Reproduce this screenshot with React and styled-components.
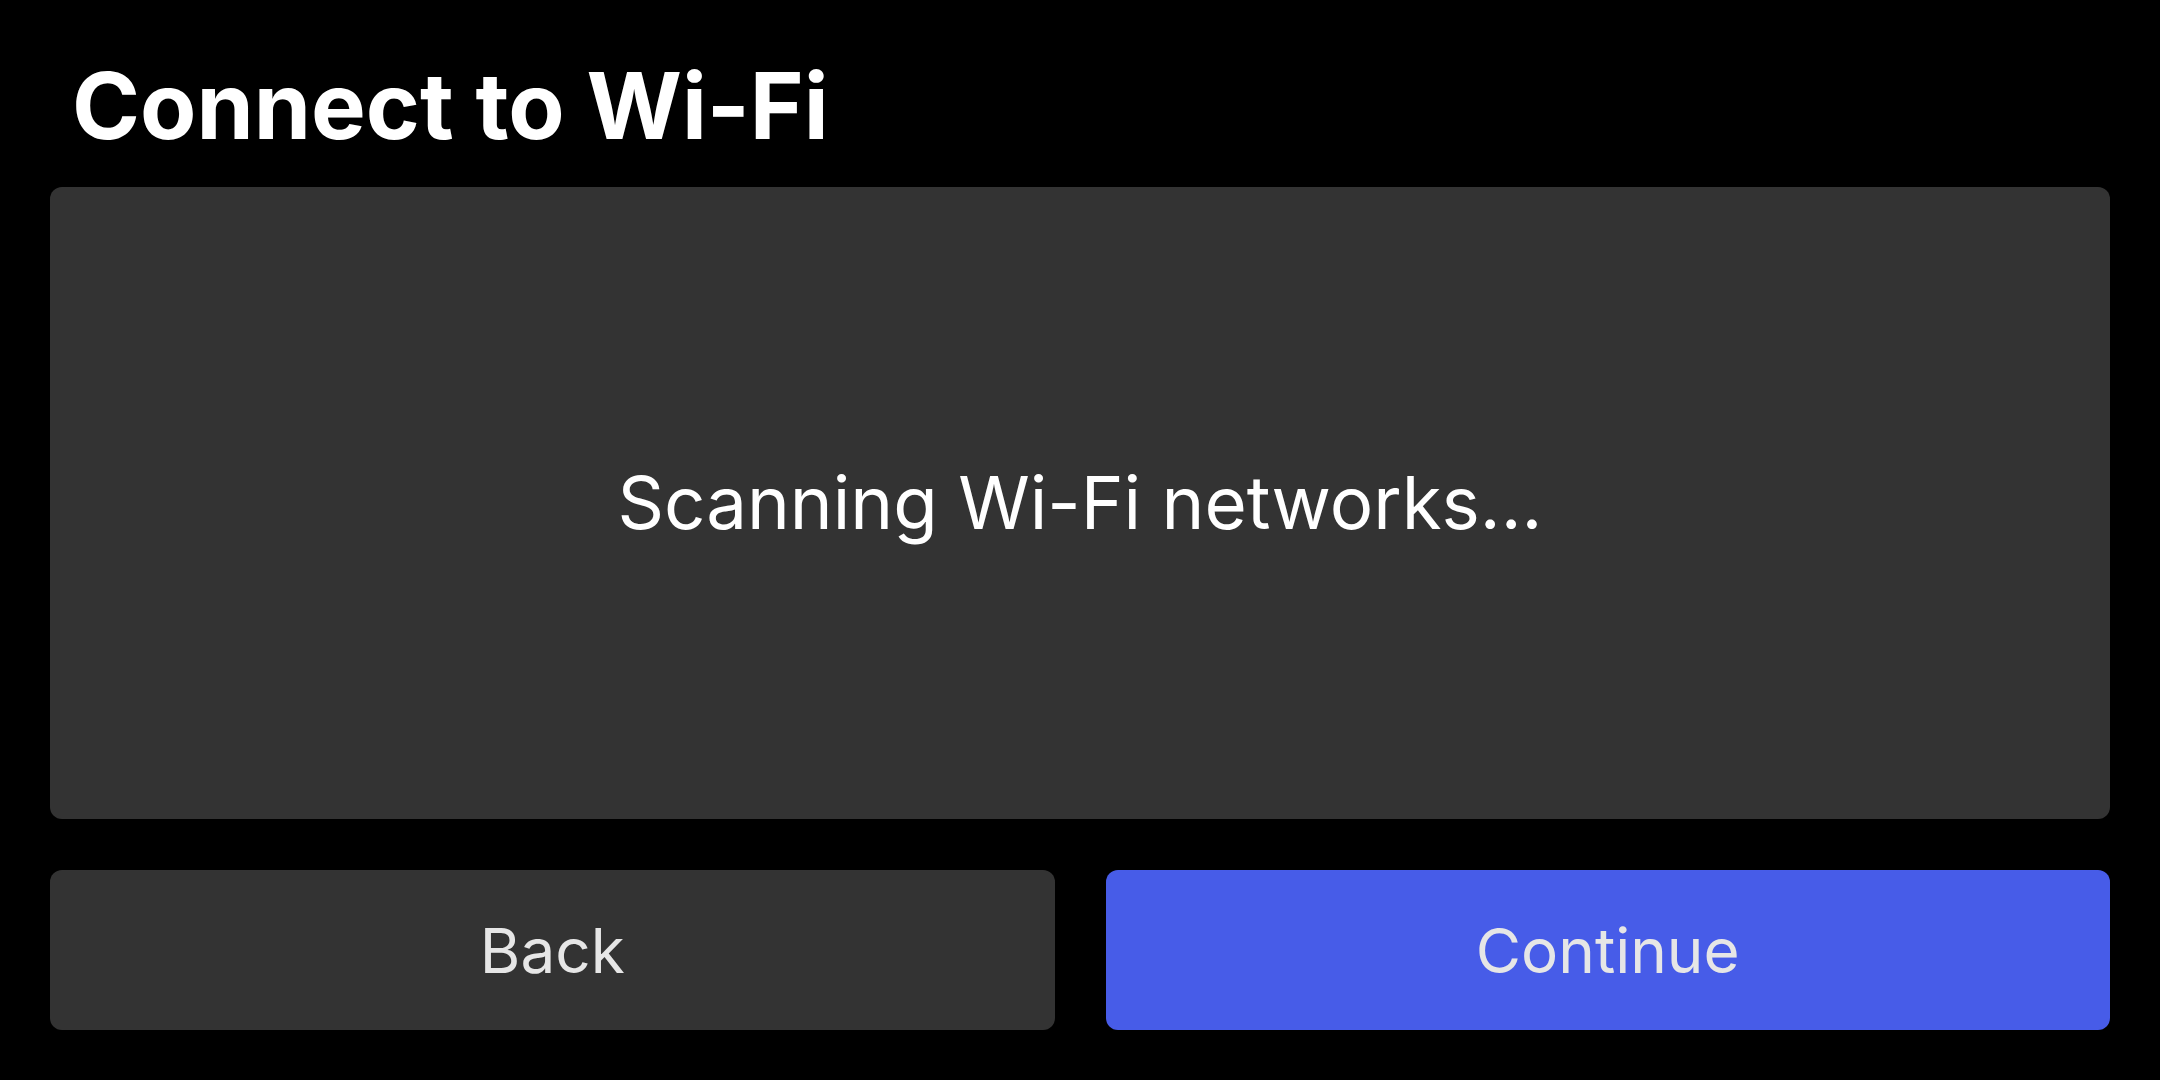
import styled, { createGlobalStyle } from 'styled-components';

const GlobalStyle = createGlobalStyle`
  html, body {
    margin: 0;
    padding: 0;
    background: #000;
  }
  body {
    font-family: Inter, "Noto Sans", sans-serif;
  }
`;

// main screen
const Screen = styled.div`
  box-sizing: border-box;
  width: 100vw;
  height: 100vh;
  display: flex;
  flex-direction: column;
  padding: 60px 50px 50px;
  background: #000;
`;

const Title = styled.h1`
  margin: 0 0 35px 22px;
  font-size: 92px;
  line-height: 92px;
  font-weight: 700;
  color: #fff;
`;

const Panel = styled.div`
  flex: 1;
  display: flex;
  align-items: center;
  justify-content: center;
  background: #333333;
  border-radius: 12px;
`;

const Status = styled.span`
  font-size: 72.6px;
  font-weight: 400;
  color: #fff;
`;

const Actions = styled.div`
  display: grid;
  grid-template-columns: 1fr 1fr;
  gap: 51px;
  margin-top: 51px;
`;

const Button = styled.button`
  height: 160px;
  border: none;
  border-radius: 12px;
  background: ${(props) => (props.primary ? '#475ce8' : '#333333')};
  color: #e6e6e6;
  font-family: Inter, "Noto Sans", sans-serif;
  font-size: 62px;
  font-weight: 400;
  cursor: pointer;
`;

const App = () => {
  return (
    <Screen>
      <GlobalStyle />
      <Title>Connect to Wi-Fi</Title>
      <Panel>
        <Status>Scanning Wi-Fi networks...</Status>
      </Panel>
      <Actions>
        <Button>Back</Button>
        <Button primary>Continue</Button>
      </Actions>
    </Screen>
  );
};

export default App;
